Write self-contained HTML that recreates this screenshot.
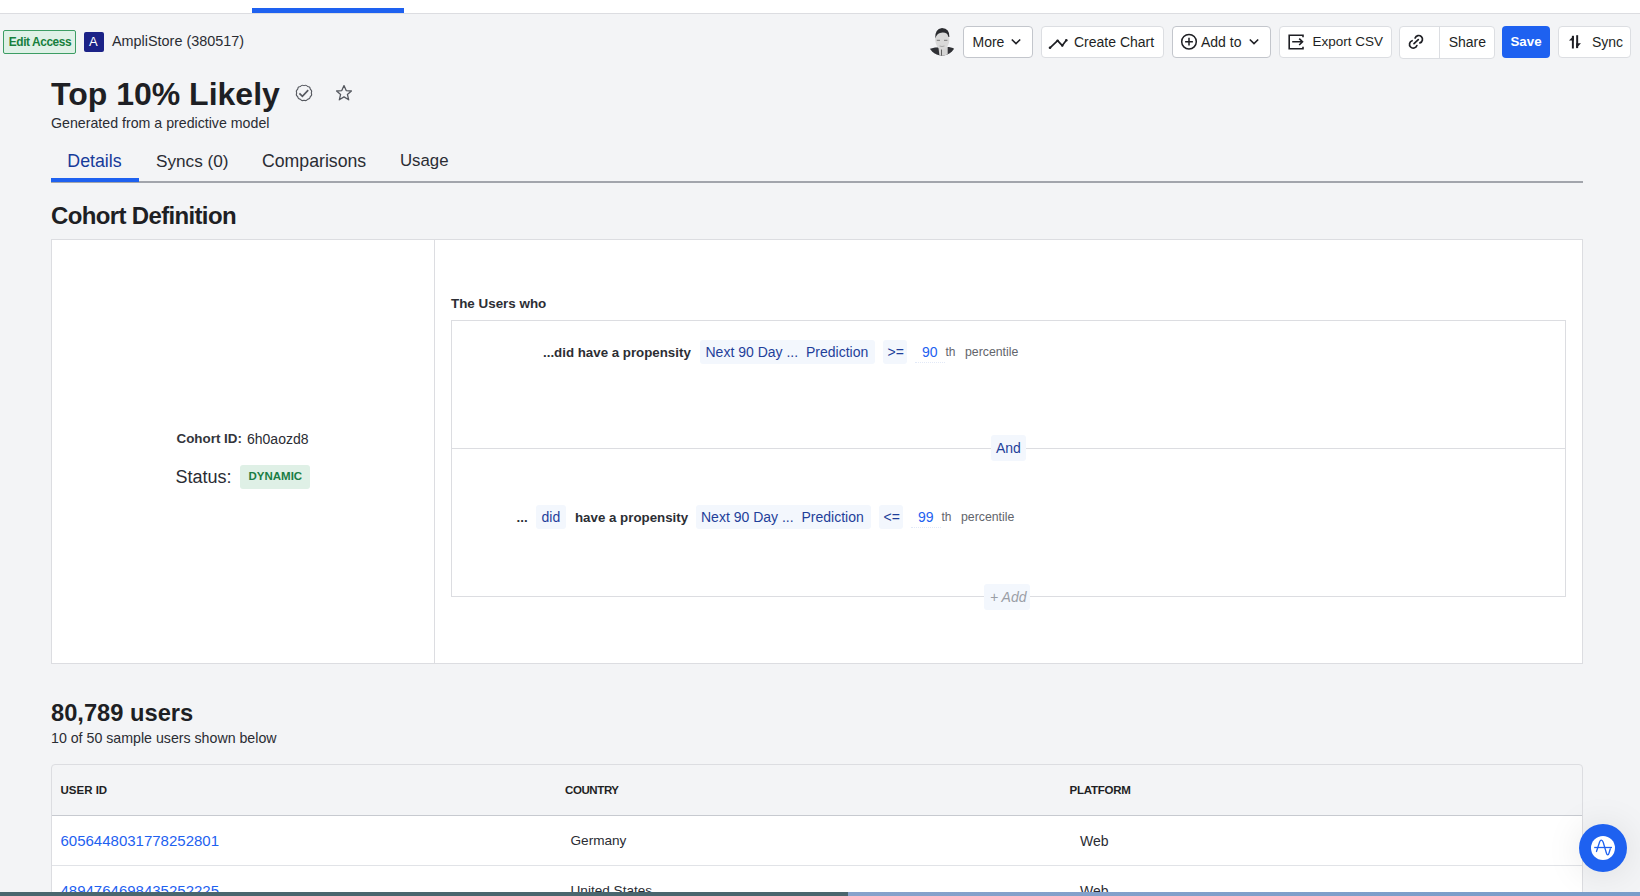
<!DOCTYPE html>
<html>
<head>
<meta charset="utf-8">
<style>
html,body{margin:0;padding:0;}
body{width:1640px;height:896px;overflow:hidden;position:relative;background:#f3f4f6;font-family:"Liberation Sans",sans-serif;color:#1e1f24;}
.a{position:absolute;white-space:nowrap;}
.t{position:absolute;white-space:nowrap;line-height:1;}
.btn{position:absolute;top:26px;height:30px;background:#fff;border:1px solid #c9ccd2;border-radius:4px;box-sizing:content-box;}
.chip{position:absolute;background:#f3f7fd;border-radius:3px;}
.blue{color:#1f3f9a;}
</style>
</head>
<body>
<!-- top white bar -->
<div class="a" style="left:0;top:0;width:1640px;height:13px;background:#fff;border-bottom:1px solid #dcdde1;"></div>
<div class="a" style="left:252px;top:8px;width:152px;height:5px;background:#1e61f0;"></div>

<!-- Edit access badge -->
<div class="a" style="left:3px;top:30px;width:71px;height:22px;border:1px solid #3c9d64;background:#dff1e7;border-radius:2px;"></div>
<div class="t" style="left:8.8px;top:36.7px;font-size:11.9px;font-weight:700;letter-spacing:-0.42px;color:#17803d;">Edit Access</div>
<div class="a" style="left:84px;top:32px;width:20px;height:20px;background:#1b2287;border-radius:2px;"></div>
<div class="t" style="left:89px;top:35px;font-size:13px;color:#fff;">A</div>
<div class="t" style="left:112px;top:34px;font-size:14.4px;color:#2a2c33;">AmpliStore (380517)</div>

<!-- Title -->
<div class="t" style="left:51px;top:77.9px;font-size:32px;font-weight:700;color:#1e1f24;">Top 10% Likely</div>
<div class="t" style="left:51px;top:115.6px;font-size:14.2px;color:#2a2c33;">Generated from a predictive model</div>

<!-- Tabs -->
<div class="t blue" style="left:67.3px;top:152.6px;font-size:17.8px;color:#163b9a;">Details</div>
<div class="t" style="left:156px;top:152.6px;font-size:17.2px;color:#2a2c33;">Syncs (0)</div>
<div class="t" style="left:262px;top:152.6px;font-size:17.7px;color:#2a2c33;">Comparisons</div>
<div class="t" style="left:400px;top:152.6px;font-size:16.8px;color:#2a2c33;">Usage</div>
<div class="a" style="left:51px;top:181px;width:1532px;height:2px;background:#a2a5ac;"></div>
<div class="a" style="left:51px;top:178px;width:88px;height:4px;background:#1e61f0;"></div>

<!-- Cohort Definition -->
<div class="t" style="left:51px;top:203.9px;font-size:24px;letter-spacing:-0.65px;font-weight:700;color:#1e1f24;">Cohort Definition</div>

<!-- Card -->
<div class="a" style="left:51px;top:239px;width:1530px;height:423px;background:#fff;border:1px solid #dcdde1;"></div>
<div class="a" style="left:434px;top:240px;width:1px;height:423px;background:#dcdde1;"></div>

<!-- Left panel -->
<div class="t" style="left:176.5px;top:432px;font-size:13.4px;font-weight:700;color:#33353b;">Cohort ID:</div>
<div class="t" style="left:247px;top:432px;font-size:14px;color:#2a2c33;">6h0aozd8</div>
<div class="t" style="left:175.5px;top:467.6px;font-size:18px;color:#2a2c33;">Status:</div>
<div class="a" style="left:240px;top:465px;width:70px;height:24px;background:#dff0e6;border-radius:3px;"></div>
<div class="t" style="left:248.5px;top:471px;font-size:11.5px;font-weight:700;color:#1a7d44;">DYNAMIC</div>


<!-- Toolbar -->
<svg class="a" style="left:926px;top:24px;" width="32" height="36" viewBox="0 0 32 36">
  <defs><clipPath id="av"><circle cx="16" cy="17.7" r="14"/></clipPath></defs>
  <g clip-path="url(#av)">
    <path d="M0 36 L0 28 Q3 24.5 9 23.5 L23 23 Q29 24 32 28 L32 36 Z" fill="#303136"/>
    <path d="M12.4 23 L13.5 32 L21.7 32 L21.7 23 Z" fill="#d4d4d4"/>
    <path d="M15.5 25 V32" stroke="#444" stroke-width="0.8"/>
  </g>
  <ellipse cx="16.3" cy="15.6" rx="7.1" ry="10.2" fill="#d9d9d9"/>
  <path d="M9.2 14.5 Q8.6 5 16 4 Q23.8 4.6 23.4 13 L22.3 12.8 Q21.5 8.4 16.5 8.6 Q11 8.8 9.2 14.5 Z" fill="#2b2c30"/>
  <path d="M10.8 16.3 h3.2 M18 16.3 h3.4" stroke="#8a8a8a" stroke-width="1.3"/>
  <path d="M13.5 22 q2.5 1 5 0" stroke="#999" stroke-width="0.8" fill="none"/>
</svg>

<div class="btn" style="left:963px;width:68px;border-color:#c3c6cc;"></div>
<div class="t" style="left:972.5px;top:34.9px;font-size:14px;color:#1e1f24;">More</div>
<svg class="a" style="left:1010px;top:37px;" width="12" height="9" viewBox="0 0 12 9"><path d="M1.8 2.5 L6 6.6 L10.2 2.5" stroke="#1e1f24" stroke-width="1.6" fill="none"/></svg>

<div class="btn" style="left:1041px;width:121px;border-color:#dcdee2;"></div>
<svg class="a" style="left:1047px;top:37px;" width="22" height="13" viewBox="0 0 22 13"><path d="M3 10.8 L10.6 3.6 L15.3 8.6 L19.3 3.2" stroke="#1e1f24" stroke-width="1.7" fill="none" stroke-linejoin="round"/><circle cx="3" cy="10.8" r="1.3" fill="#1e1f24"/><circle cx="10.6" cy="3.6" r="1.2" fill="#1e1f24"/><circle cx="15.3" cy="8.6" r="1.2" fill="#1e1f24"/><circle cx="19.3" cy="3.2" r="1.3" fill="#1e1f24"/></svg>
<div class="t" style="left:1074px;top:34.9px;font-size:14px;color:#1e1f24;">Create Chart</div>

<div class="btn" style="left:1172px;width:97px;border-color:#c3c6cc;"></div>
<svg class="a" style="left:1179px;top:32px;" width="20" height="20" viewBox="0 0 20 20"><circle cx="10" cy="9.7" r="7.3" stroke="#1e1f24" stroke-width="1.5" fill="none"/><path d="M10 5.8 V13.6 M6.1 9.7 H13.9" stroke="#1e1f24" stroke-width="1.5"/></svg>
<div class="t" style="left:1201px;top:34.6px;font-size:14px;color:#1e1f24;">Add to</div>
<svg class="a" style="left:1248px;top:37px;" width="12" height="9" viewBox="0 0 12 9"><path d="M1.8 2.5 L6 6.6 L10.2 2.5" stroke="#1e1f24" stroke-width="1.6" fill="none"/></svg>

<div class="btn" style="left:1279px;width:111px;border-color:#dcdee2;"></div>
<svg class="a" style="left:1286px;top:32px;" width="20" height="20" viewBox="0 0 20 20"><path d="M17 5.2 V3.2 H3.2 V16.8 H17 V14.8" stroke="#1e1f24" stroke-width="1.6" fill="none"/><path d="M6.2 9.8 H16.5 M13.2 6.6 L16.5 9.8 L13.2 13" stroke="#1e1f24" stroke-width="1.6" fill="none"/></svg>
<div class="t" style="left:1312.5px;top:34.9px;font-size:13.5px;color:#1e1f24;">Export CSV</div>

<div class="btn" style="left:1399px;width:94px;top:25.5px;height:31px;border-color:#dcdee2;"></div>
<div class="a" style="left:1439px;top:26px;width:1px;height:32px;background:#dcdee2;"></div>
<svg class="a" style="left:1403px;top:30px;" width="28" height="24" viewBox="0 0 28 24"><path d="M12.1 8.0 A3.8 3.8 0 1 1 16.9 12.9" stroke="#1e1f24" stroke-width="1.7" fill="none" stroke-linecap="round"/><path d="M9.1 10.7 A3.8 3.8 0 1 0 13.9 15.5" stroke="#1e1f24" stroke-width="1.7" fill="none" stroke-linecap="round"/><path d="M11 13.7 L15.3 9.7" stroke="#1e1f24" stroke-width="1.7" stroke-linecap="round"/></svg>
<div class="t" style="left:1448.7px;top:35px;font-size:14px;color:#1e1f24;">Share</div>

<div class="a" style="left:1502px;top:26px;width:48px;height:32px;background:#1e61f0;border-radius:4px;"></div>
<div class="t" style="left:1510.5px;top:35.4px;font-size:13.3px;font-weight:700;color:#fff;">Save</div>

<div class="btn" style="left:1558px;width:71px;border-color:#dcdee2;"></div>
<svg class="a" style="left:1562px;top:30px;" width="28" height="24" viewBox="0 0 28 24"><rect x="9.9" y="5.8" width="1.95" height="12.7" fill="#1e1f24"/><path d="M11.85 5.7 L6.9 10.5 L11.85 10.5 Z" fill="#1e1f24"/><rect x="14.2" y="5.2" width="1.95" height="12.9" fill="#1e1f24"/><path d="M14.2 18.2 L19 13.3 L14.2 13.3 Z" fill="#1e1f24"/></svg>
<div class="t" style="left:1592px;top:35px;font-size:14px;color:#1e1f24;">Sync</div>

<!-- Title icons -->
<svg class="a" style="left:294px;top:83px;" width="20" height="20" viewBox="0 0 20 20"><path d="M17.30 9.90 A2.83 2.83 0 0 1 16.32 13.55 A2.83 2.83 0 0 1 13.65 16.22 A2.83 2.83 0 0 1 10.00 17.20 A2.83 2.83 0 0 1 6.35 16.22 A2.83 2.83 0 0 1 3.68 13.55 A2.83 2.83 0 0 1 2.70 9.90 A2.83 2.83 0 0 1 3.68 6.25 A2.83 2.83 0 0 1 6.35 3.58 A2.83 2.83 0 0 1 10.00 2.60 A2.83 2.83 0 0 1 13.65 3.58 A2.83 2.83 0 0 1 16.32 6.25 A2.83 2.83 0 0 1 17.30 9.90 Z" stroke="#55585f" stroke-width="1.05" fill="none"/><path d="M5.4 10.3 L8.4 13.3 L14.2 7.2" stroke="#55585f" stroke-width="1.7" fill="none"/></svg>
<svg class="a" style="left:334px;top:83px;" width="20" height="20" viewBox="0 0 20 20"><path d="M10 2.6 L12.2 7.6 L17.4 8 L13.4 11.4 L14.7 16.8 L10 13.9 L5.3 16.8 L6.6 11.4 L2.6 8 L7.8 7.6 Z" stroke="#55585f" stroke-width="1.3" fill="none" stroke-linejoin="round"/></svg>

<!-- Rules -->
<div class="t" style="left:451px;top:297.2px;font-size:13.4px;font-weight:700;color:#2c2e34;">The Users who</div>
<div class="a" style="left:451px;top:320px;width:1113px;height:275px;border:1px solid #dcdde1;"></div>
<div class="a" style="left:452px;top:448px;width:1113px;height:1px;background:#dcdde1;"></div>

<div class="t" style="left:543px;top:345.7px;font-size:13.3px;font-weight:700;color:#2c2e34;">...did have a propensity</div>
<div class="chip" style="left:700px;top:340px;width:175px;height:24px;"></div>
<div class="t blue" style="left:705.5px;top:344.9px;font-size:14px;">Next 90 Day ...</div>
<div class="t blue" style="left:806px;top:344.9px;font-size:14px;">Prediction</div>
<div class="chip" style="left:883px;top:340px;width:24px;height:24px;"></div>
<div class="t blue" style="left:887.5px;top:344.9px;font-size:14px;">&gt;=</div>
<div class="t" style="left:922px;top:344.9px;font-size:14px;color:#1e61f0;">90</div>
<div class="a" style="left:915px;top:362px;width:30px;height:0;border-top:1px dotted #e2e9f7;"></div>
<div class="t" style="left:945.5px;top:345.8px;font-size:12px;color:#62656c;">th</div>
<div class="t" style="left:965px;top:345.8px;font-size:12.3px;color:#62656c;">percentile</div>

<div class="chip" style="left:991px;top:435px;width:35px;height:26px;"></div>
<div class="t blue" style="left:996px;top:441.1px;font-size:14px;">And</div>

<div class="t" style="left:516.5px;top:510.7px;font-size:13.3px;font-weight:700;color:#2c2e34;">...</div>
<div class="chip" style="left:536px;top:505px;width:30px;height:24px;"></div>
<div class="t blue" style="left:541.5px;top:510.2px;font-size:14px;">did</div>
<div class="t" style="left:575px;top:510.7px;font-size:13.3px;font-weight:700;color:#2c2e34;">have a propensity</div>
<div class="chip" style="left:696px;top:505px;width:175px;height:24px;"></div>
<div class="t blue" style="left:701px;top:510.2px;font-size:14px;">Next 90 Day ...</div>
<div class="t blue" style="left:801.5px;top:510.2px;font-size:14px;">Prediction</div>
<div class="chip" style="left:879px;top:505px;width:24px;height:24px;"></div>
<div class="t blue" style="left:883.5px;top:510.2px;font-size:14px;">&lt;=</div>
<div class="t" style="left:918px;top:510.2px;font-size:14px;color:#1e61f0;">99</div>
<div class="a" style="left:911px;top:527px;width:30px;height:0;border-top:1px dotted #e2e9f7;"></div>
<div class="t" style="left:941.5px;top:510.8px;font-size:12px;color:#62656c;">th</div>
<div class="t" style="left:961px;top:510.8px;font-size:12.3px;color:#62656c;">percentile</div>

<div class="chip" style="left:984px;top:584px;width:46px;height:26px;"></div>
<div class="t" style="left:990px;top:589.8px;font-size:14px;font-style:italic;color:#9a9ea6;">+ Add</div>

<!-- Users -->
<div class="t" style="left:51px;top:701.9px;font-size:23.7px;font-weight:700;color:#1e1f24;">80,789 users</div>
<div class="t" style="left:51px;top:731.2px;font-size:14.2px;color:#2a2c33;">10 of 50 sample users shown below</div>

<div class="a" style="left:51px;top:764px;width:1530px;height:140px;border:1px solid #dcdde1;border-radius:4px;background:#f3f4f6;overflow:hidden;">
  <div class="a" style="left:0;top:50px;width:1530px;height:1px;background:#c7cad0;"></div>
  <div class="a" style="left:0;top:51px;width:1530px;height:100px;background:#fff;"></div>
  <div class="a" style="left:0;top:100px;width:1530px;height:1px;background:#e1e3e7;"></div>
</div>
<div class="t" style="left:60.5px;top:784.9px;font-size:11.5px;font-weight:700;color:#1e1f24;">USER ID</div>
<div class="t" style="left:565px;top:784.9px;font-size:11.5px;letter-spacing:-0.4px;font-weight:700;color:#1e1f24;">COUNTRY</div>
<div class="t" style="left:1069.5px;top:784.9px;font-size:11.5px;letter-spacing:-0.25px;font-weight:700;color:#1e1f24;">PLATFORM</div>
<div class="t" style="left:60.5px;top:833.1px;font-size:15px;color:#1e61f0;">6056448031778252801</div>
<div class="t" style="left:570.5px;top:833.9px;font-size:13.6px;color:#2a2c33;">Germany</div>
<div class="t" style="left:1080px;top:833.9px;font-size:14px;color:#2a2c33;">Web</div>
<div class="t" style="left:60.5px;top:883.1px;font-size:15px;color:#1e61f0;">4894764698435252225</div>
<div class="t" style="left:570.5px;top:883.9px;font-size:13.6px;color:#2a2c33;">United States</div>
<div class="t" style="left:1080px;top:883.9px;font-size:14px;color:#2a2c33;">Web</div>

<!-- chat button -->
<div class="a" style="left:1579px;top:824px;width:48px;height:48px;border-radius:50%;background:#1e61f0;box-shadow:0 2px 36px rgba(0,0,0,0.10);"></div>
<div class="a" style="left:1591px;top:836px;width:24px;height:24px;border-radius:50%;background:#fff;"></div>
<svg class="a" style="left:1591px;top:836px;" width="24" height="24" viewBox="0 0 24 24"><path d="M3.2 11.5 H21" stroke="#1e61f0" stroke-width="1.3"/><path d="M5.5 15.5 L8.6 6 Q9.3 4.1 10.3 4.1 Q11.5 4.1 12.2 6.2 L15.3 16.8 Q15.9 18.9 16.7 18.9 Q17.6 18.9 18.2 16.5 L19.3 12.8" stroke="#1e61f0" stroke-width="1.3" fill="none" stroke-linecap="round" stroke-linejoin="round"/></svg>

<!-- bottom bar -->
<div class="a" style="left:0;top:892px;width:848px;height:4px;background:#4a666e;"></div>
<div class="a" style="left:848px;top:892px;width:792px;height:4px;background:linear-gradient(90deg,#87a2cb,#7a9dc9);"></div>

</body>
</html>
